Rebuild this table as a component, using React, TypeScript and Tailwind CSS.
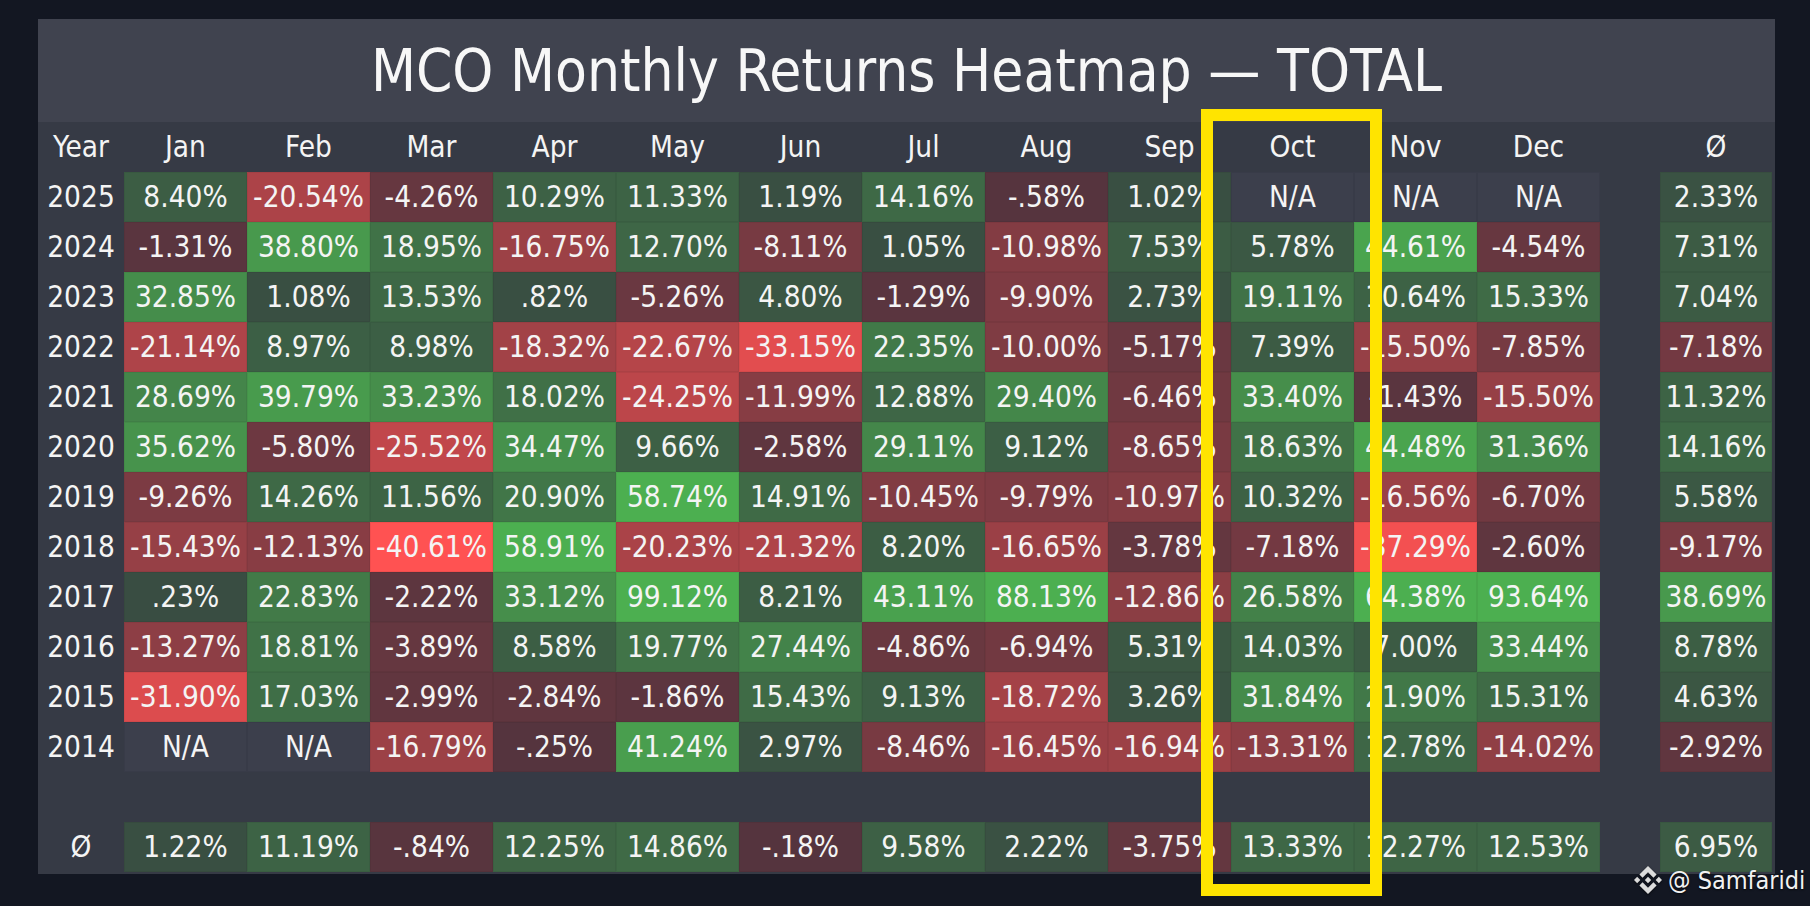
import React from "react";

const MONTHS = ["Jan", "Feb", "Mar", "Apr", "May", "Jun", "Jul", "Aug", "Sep", "Oct", "Nov", "Dec"];

type Row = { label: string; vals: string[]; avg: string };

const ROWS: Row[] = [
  { label: "2025", vals: ["8.40", "-20.54", "-4.26", "10.29", "11.33", "1.19", "14.16", "-.58", "1.02", "N/A", "N/A", "N/A"], avg: "2.33" },
  { label: "2024", vals: ["-1.31", "38.80", "18.95", "-16.75", "12.70", "-8.11", "1.05", "-10.98", "7.53", "5.78", "44.61", "-4.54"], avg: "7.31" },
  { label: "2023", vals: ["32.85", "1.08", "13.53", ".82", "-5.26", "4.80", "-1.29", "-9.90", "2.73", "19.11", "10.64", "15.33"], avg: "7.04" },
  { label: "2022", vals: ["-21.14", "8.97", "8.98", "-18.32", "-22.67", "-33.15", "22.35", "-10.00", "-5.17", "7.39", "-15.50", "-7.85"], avg: "-7.18" },
  { label: "2021", vals: ["28.69", "39.79", "33.23", "18.02", "-24.25", "-11.99", "12.88", "29.40", "-6.46", "33.40", "-1.43", "-15.50"], avg: "11.32" },
  { label: "2020", vals: ["35.62", "-5.80", "-25.52", "34.47", "9.66", "-2.58", "29.11", "9.12", "-8.65", "18.63", "44.48", "31.36"], avg: "14.16" },
  { label: "2019", vals: ["-9.26", "14.26", "11.56", "20.90", "58.74", "14.91", "-10.45", "-9.79", "-10.97", "10.32", "-16.56", "-6.70"], avg: "5.58" },
  { label: "2018", vals: ["-15.43", "-12.13", "-40.61", "58.91", "-20.23", "-21.32", "8.20", "-16.65", "-3.78", "-7.18", "-37.29", "-2.60"], avg: "-9.17" },
  { label: "2017", vals: [".23", "22.83", "-2.22", "33.12", "99.12", "8.21", "43.11", "88.13", "-12.86", "26.58", "64.38", "93.64"], avg: "38.69" },
  { label: "2016", vals: ["-13.27", "18.81", "-3.89", "8.58", "19.77", "27.44", "-4.86", "-6.94", "5.31", "14.03", "7.00", "33.44"], avg: "8.78" },
  { label: "2015", vals: ["-31.90", "17.03", "-2.99", "-2.84", "-1.86", "15.43", "9.13", "-18.72", "3.26", "31.84", "21.90", "15.31"], avg: "4.63" },
  { label: "2014", vals: ["N/A", "N/A", "-16.79", "-.25", "41.24", "2.97", "-8.46", "-16.45", "-16.94", "-13.31", "12.78", "-14.02"], avg: "-2.92" },
];

const AVG_ROW: Row = {
  label: "Ø",
  vals: ["1.22", "11.19", "-.84", "12.25", "14.86", "-.18", "9.58", "2.22", "-3.75", "13.33", "12.27", "12.53"],
  avg: "6.95",
};

function mix(a: number[], b: number[], t: number) {
  const c = a.map((v, i) => Math.round(v + (b[i] - v) * t));
  return `rgb(${c[0]},${c[1]},${c[2]})`;
}

function cellColor(v: string): string {
  if (v === "N/A") return "#3c3f4c";
  const n = parseFloat(v);
  if (n >= 0) {
    const t = Math.min(n / 50, 1);
    return mix([57, 77, 66], [76, 175, 80], t);
  }
  const t = Math.min(-n / 40, 1);
  return mix([84, 52, 62], [255, 82, 82], t);
}

function fmt(v: string) {
  return v === "N/A" ? "N/A" : `${v}%`;
}

function Cell({ v }: { v: string }) {
  return (
    <div
      className="h-[50px] flex items-center justify-center text-[29.5px] text-[#f4f4f4] whitespace-nowrap overflow-hidden shadow-[inset_0_0_0_1px_rgba(0,0,0,0.05)]"
      style={{ backgroundColor: cellColor(v) }}
    >
      {fmt(v)}
    </div>
  );
}

function Label({ children }: { children: React.ReactNode }) {
  return (
    <div className="h-[50px] flex items-center justify-center text-[29.5px] text-[#f4f4f4]">{children}</div>
  );
}

function DataRow({ row }: { row: Row }) {
  return (
    <>
      <Label>{row.label}</Label>
      {row.vals.map((v, i) => (
        <Cell key={i} v={v} />
      ))}
      <div />
      <Cell v={row.avg} />
    </>
  );
}

function BinanceLogo() {
  return (
    <svg width="28" height="28" viewBox="0 0 126.61 126.61" className="drop-shadow-[0_1px_1px_rgba(0,0,0,0.6)]">
      <g fill="#dcdcdc">
        <path d="M38.73 53.2l24.59-24.58 24.6 24.6 14.3-14.31L63.32 0 24.42 38.9z" />
        <path d="M0 63.31l14.3-14.31 14.31 14.31-14.31 14.3z" />
        <path d="M38.73 73.41l24.59 24.59 24.6-24.6 14.31 14.29-38.9 38.91-38.91-38.88z" />
        <path d="M98 63.31l14.3-14.31 14.31 14.3-14.31 14.32z" />
        <path d="M77.83 63.3L63.32 48.78 52.59 59.51l-1.24 1.23-2.54 2.54 14.51 14.5 14.51-14.47z" />
      </g>
    </svg>
  );
}

export default function App() {
  return (
    <div className="relative w-[1810px] h-[906px] bg-[#131722] overflow-hidden pl-[38px] pt-[19px] font-['DejaVu_Sans_Condensed','DejaVu_Sans',sans-serif] [font-stretch:condensed]">
      <div className="w-[1737px] h-[855px] flex flex-col bg-[#363a45]">
        <div className="h-[103px] bg-[#40434f] flex items-center justify-center text-[58px] text-[#f7f7f7] leading-none">
          MCO Monthly Returns Heatmap — TOTAL
        </div>
        <div className="grid grid-cols-[86px_repeat(12,123px)_60px_112px]">
          <Label>Year</Label>
          {MONTHS.map((m) => (
            <Label key={m}>{m}</Label>
          ))}
          <div />
          <Label>Ø</Label>
          {ROWS.map((r) => (
            <DataRow key={r.label} row={r} />
          ))}
          <div className="col-span-15 h-[50px]" />
          <DataRow row={AVG_ROW} />
        </div>
      </div>

      <div className="absolute left-[1201px] top-[109px] w-[181px] h-[787px] border-[12px] border-[#ffe400]" />

      <div className="absolute left-[1634px] top-[866px] flex items-center gap-[6px]">
        <BinanceLogo />
        <span className="text-[25px] leading-none text-[#f2f2f2] [text-shadow:0_1px_2px_rgba(0,0,0,0.7)]">@ Samfaridi</span>
      </div>
    </div>
  );
}
